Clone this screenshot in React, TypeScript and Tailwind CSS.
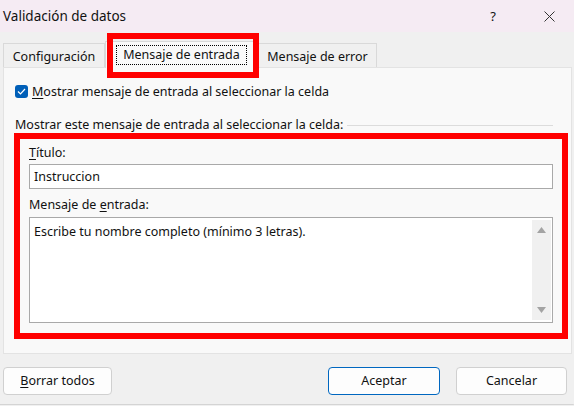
import React from 'react';

const Tab = ({ label, width }: { label: string; width: string }) => (
    <div className={`${width} flex h-[24px] items-center justify-center border border-b-0 border-[#d9d9d9] bg-[#f0f0f0] pt-[2px]`}>
        <span>{label}</span>
    </div>
);

const Arrow = ({ up }: { up?: boolean }) => (
    <svg width="9" height="6" viewBox="0 0 9 6">
        <path d={up ? 'M4.5 0 L9 6 L0 6 Z' : 'M0 0 L9 0 L4.5 6 Z'} fill="#a3a3a3" />
    </svg>
);

const App = () => {
    return (
        <div className="flex h-[406px] w-[574px] flex-col overflow-hidden bg-[#f0f0f0] font-['Noto_Sans',sans-serif] text-[12.5px] leading-[16px] text-[#111]">
            {/* title bar */}
            <div className="flex h-[32px] items-center bg-[#f5ebf3] pl-[3px]">
                <span className="text-[13.5px]">Validación de datos</span>
                <span className="ml-auto mr-[10px] w-[46px] text-center text-[13px]">?</span>
                <div className="mr-[2px] flex w-[46px] justify-center">
                    <svg width="11" height="11" viewBox="0 0 11 11">
                        <path d="M0.5 0.5 L10.5 10.5 M10.5 0.5 L0.5 10.5" stroke="#333" strokeWidth="1" />
                    </svg>
                </div>
            </div>

            {/* tabs */}
            <div className="relative z-10 flex h-[35px] items-end pl-[3px]">
                <Tab label="Configuración" width="w-[102px]" />
                <div className="relative -mb-px flex h-[27px] w-[153px] items-start justify-center border border-b-0 border-[#d9d9d9] bg-[#f9f9f9] pt-[3px]">
                    <span className="border border-dotted border-black px-[6px] py-[1px]">Mensaje de entrada</span>
                    <div className="absolute left-[1px] top-[-9px] h-[45px] w-[152px] border-[6px] border-[#ff0000]" />
                </div>
                <Tab label="Mensaje de error" width="w-[119px]" />
            </div>

            {/* panel */}
            <div className="ml-[3px] flex h-[287px] w-[569px] flex-col border border-[#e3e3e3] bg-[#f9f9f9]">
                <div className="mt-[16px] flex h-[15px] items-center pl-[11px]">
                    <div className="flex h-[13px] w-[13px] items-center justify-center rounded-[3px] bg-[#005fb8]">
                        <svg width="9" height="7" viewBox="0 0 9 7">
                            <path d="M1 3.5 L3.5 6 L8 1" stroke="#fff" strokeWidth="1.2" fill="none" />
                        </svg>
                    </div>
                    <span className="ml-[4px]">
                        <span className="underline underline-offset-2">M</span>ostrar mensaje de entrada al seleccionar la celda
                    </span>
                </div>

                <div className="mt-[18px] flex h-[16px] items-center pl-[11px] pr-[18px]">
                    <span>Mostrar este mensaje de entrada al seleccionar la celda:</span>
                    <div className="ml-[4px] h-px flex-1 bg-[#dcdcdc]" />
                </div>

                <div className="ml-[10px] flex h-[206px] w-[554px] flex-col border-[6px] border-[#ff0000] pl-[9px] pt-[6px]">
                    <div className="h-[16px]">
                        <span className="underline underline-offset-2">T</span>ítulo:
                    </div>
                    <div className="mt-[3px] flex h-[25px] w-[524px] items-center border border-[#a9a9a9] bg-white pl-[4px]">
                        Instruccion
                    </div>
                    <div className="mt-[8px] h-[16px]">
                        Mensaje de <span className="underline underline-offset-2">e</span>ntrada:
                    </div>
                    <div className="mt-[4px] flex h-[106px] w-[524px] border border-[#a9a9a9] bg-white">
                        <div className="flex-1 pl-[4px] pt-[6px]">Escribe tu nombre completo (mínimo 3 letras).</div>
                        <div className="my-[2px] mr-[1px] flex w-[19px] flex-col items-center justify-between bg-[#f0f0f0] py-[7px]">
                            <Arrow up />
                            <Arrow />
                        </div>
                    </div>
                </div>
            </div>

            {/* buttons */}
            <div className="mt-[13px] flex h-[28px] items-stretch pl-[3px] pr-[7px]">
                <button className="w-[109px] rounded-[4px] border border-[#d0d0d0] bg-[#fdfdfd]">
                    <span className="underline underline-offset-2">B</span>orrar todos
                </button>
                <button className="ml-auto w-[112px] rounded-[4px] border border-[#0067c0] bg-[#fdfdfd]">Aceptar</button>
                <button className="ml-[16px] w-[111px] rounded-[4px] border border-[#d0d0d0] bg-[#fdfdfd]">Cancelar</button>
            </div>

            <div className="mt-[9px] h-px rounded-br-[6px] bg-[#d4d4d4]" />
        </div>
    );
};

export default App;
